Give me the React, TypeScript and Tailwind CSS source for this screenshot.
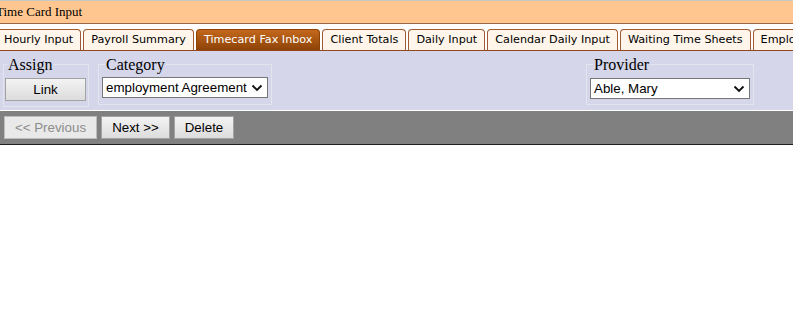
import React from "react";

const tabs = [
  "Hourly Input",
  "Payroll Summary",
  "Timecard Fax Inbox",
  "Client Totals",
  "Daily Input",
  "Calendar Daily Input",
  "Waiting Time Sheets",
  "Employee",
];

const verdana = { fontFamily: '"DejaVu Sans", Verdana, sans-serif' };
const serif = { fontFamily: '"Liberation Serif", "Times New Roman", serif' };
const arial = { fontFamily: '"Liberation Sans", Arial, sans-serif' };

function Chevron() {
  return (
    <svg width="12" height="8" viewBox="0 0 12 8" className="shrink-0">
      <path d="M1.5 1.5 L6 6 L10.5 1.5" fill="none" stroke="#111" strokeWidth="1.9" />
    </svg>
  );
}

function Select({ value, width }: { value: string; width: string }) {
  return (
    <div
      className={`${width} h-[21px] flex items-center justify-between bg-white border border-[#767676] pl-[3px] pr-[4px] text-[13.33px] text-black`}
      style={arial}
    >
      <span className="whitespace-nowrap leading-none">{value}</span>
      <Chevron />
    </div>
  );
}

function Btn({ label, width, disabled }: { label: string; width: string; disabled?: boolean }) {
  return (
    <button
      className={`${width} h-[23px] border text-[13.33px] leading-none ${
        disabled
          ? "bg-[#e9e9e9] border-[#bdbdbd] text-[#8c8c8c]"
          : "bg-gradient-to-b from-[#f3f3f3] to-[#dcdcdc] border-[#a3a3a3] text-black"
      }`}
      style={arial}
    >
      {label}
    </button>
  );
}

export default function App() {
  return (
    <div className="w-[793px] h-[320px] bg-white overflow-hidden">
      {/* title bar */}
      <div className="h-[24px] border-t border-[#c8c8c8] border-b border-b-[#9a6848] bg-[#ffc690] flex items-center">
        <span className="ml-[-4px] text-[13px] text-black whitespace-nowrap" style={serif}>
          Time Card Input
        </span>
      </div>

      {/* tabs */}
      <div className="h-[27px] pt-[5px] flex items-end gap-[2px] border-b border-[#94471c] whitespace-nowrap">
        {tabs.map((t, i) => {
          const active = t === "Timecard Fax Inbox";
          return (
            <div
              key={t}
              className={`h-[21px] shrink-0 flex items-center px-[7px] rounded-t-[4px] border border-b-0 text-[11.2px] ${
                i === 0 ? "pl-[4px] border-l-0 rounded-tl-none" : ""
              } ${
                active
                  ? "bg-gradient-to-b from-[#c4681c] to-[#8d4306] border-[#8d4306] text-white"
                  : "bg-[#fff5ea] border-[#a05a34] text-black"
              }`}
              style={verdana}
            >
              {t}
            </div>
          );
        })}
      </div>

      {/* filter panel */}
      <div className="h-[59px] bg-[#d5d6e9] flex items-start pt-[5px]">
        <fieldset className="ml-[3px] w-[86px] border border-[#e4e4ef] px-[1px] pt-[3px] pb-[5px]">
          <legend className="ml-[2px] px-[1px] text-[16px] leading-[17px] text-black" style={serif}>
            Assign
          </legend>
          <Btn label="Link" width="w-[81px]" />
        </fieldset>

        <fieldset className="ml-[9px] w-[173px] border border-[#e4e4ef] px-[3px] pt-[4px] pb-[6px]">
          <legend className="ml-[3px] px-[1px] text-[16px] leading-[17px] text-black" style={serif}>
            Category
          </legend>
          <Select value="employment Agreement" width="w-[166px]" />
        </fieldset>

        <fieldset className="ml-[314px] w-[168px] border border-[#e4e4ef] px-[3px] pt-[5px] pb-[5px]">
          <legend className="ml-[3px] px-[1px] text-[16px] leading-[17px] text-black" style={serif}>
            Provider
          </legend>
          <Select value="Able, Mary" width="w-[160px]" />
        </fieldset>
      </div>

      {/* action bar */}
      <div className="h-[35px] border-t border-white border-b border-b-[#202020] bg-[#808080] flex items-center gap-[4px] pl-[4px]">
        <Btn label="<< Previous" width="w-[93px]" disabled />
        <Btn label="Next >>" width="w-[69px]" />
        <Btn label="Delete" width="w-[60px]" />
      </div>
    </div>
  );
}
